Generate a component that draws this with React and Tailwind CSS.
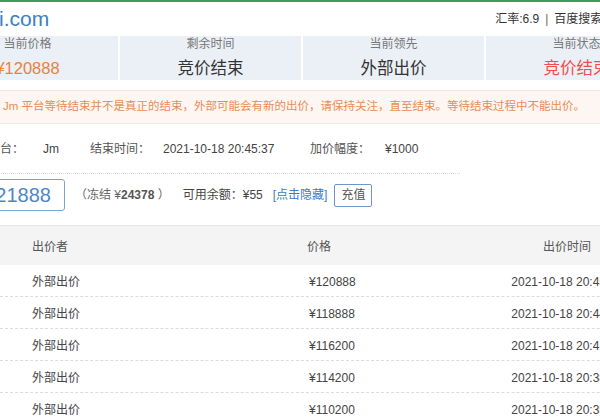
const stats = [
  { label: '当前价格', value: '¥120888', tone: 'text-[#e8813f]' },
  { label: '剩余时间', value: '竞价结束', tone: 'text-[#333]' },
  { label: '当前领先', value: '外部出价', tone: 'text-[#333]' },
  { label: '当前状态', value: '竞价结束', tone: 'text-[#f24b4b]' },
]

const bids = [
  { who: '外部出价', price: '¥120888', time: '2021-10-18 20:45:37' },
  { who: '外部出价', price: '¥118888', time: '2021-10-18 20:44:12' },
  { who: '外部出价', price: '¥116200', time: '2021-10-18 20:41:05' },
  { who: '外部出价', price: '¥114200', time: '2021-10-18 20:38:51' },
  { who: '外部出价', price: '¥110200', time: '2021-10-18 20:35:20' },
]

export default function App() {
  return (
    <div className="w-[600px] h-[420px] overflow-hidden bg-white border-t-2 border-[#3a9d5d] font-['Liberation_Sans','Noto_Sans_CJK_SC',sans-serif] text-[12px] text-[#555]">
      {/* header */}
      <div className="h-[34px] flex items-center whitespace-nowrap">
        <span className="-ml-[1px] text-[21px] text-[#3b80c4]">i.com</span>
        <div className="ml-[446px] flex items-center gap-[6px] text-[12px] text-[#333]">
          <span>汇率:6.9</span>
          <span className="text-[#666]">|</span>
          <span>百度搜索</span>
        </div>
      </div>

      {/* stats */}
      <div className="-ml-[63px] w-[730px] flex gap-[2px]">
        {stats.map((s) => (
          <div key={s.label} className="w-[181px] h-[44px] bg-[#ebf0f6] flex flex-col items-center shrink-0">
            <span className="mt-[1px] text-[12px] text-[#777] leading-[14px]">{s.label}</span>
            <span className={'mt-[7px] text-[16.5px] leading-[20px] whitespace-nowrap ' + s.tone}>{s.value}</span>
          </div>
        ))}
      </div>

      {/* notice */}
      <div className="mt-[10px] -ml-[12px] w-[640px] h-[34px] flex items-center pl-[14px] bg-[#fdf6f3] border border-[#f9e6dc] text-[11.5px] text-[#e98d55] whitespace-nowrap">
        Jm 平台等待结束并不是真正的结束，外部可能会有新的出价，请保持关注，直至结束。等待结束过程中不能出价。
      </div>

      {/* info row */}
      <div className="-ml-[20px] w-[480px] h-[50px] flex items-center border-b border-dotted border-[#d8d8d8] whitespace-nowrap text-[#555]">
        <span className="ml-[8px] w-[55px]">平台：</span>
        <span className="w-[47px] text-[#444]">Jm</span>
        <span className="w-[73px]">结束时间：</span>
        <span className="w-[147px] text-[#444]">2021-10-18 20:45:37</span>
        <span className="w-[75px]">加价幅度：</span>
        <span className="text-[#444]">¥1000</span>
      </div>

      {/* bid row */}
      <div className="mt-[5px] flex items-center whitespace-nowrap">
        <div className="-ml-[40px] w-[105px] h-[32px] shrink-0 border border-[#7fa3d1] rounded-[3px] flex items-center justify-end pr-[13px] text-[20px] text-[#4f86c6]">
          121888
        </div>
        <span className="ml-[10px] text-[#666]">（冻结 ¥<b className="text-[#555]">24378</b> ）</span>
        <span className="ml-[13px] text-[#444]">可用余额：¥55</span>
        <span className="ml-[10px] text-[#3b7cc4]">[点击隐藏]</span>
        <button className="ml-[7px] w-[38px] h-[23px] border border-[#6e96c6] rounded-[2px] text-[#555] text-[12px] flex items-center justify-center">充值</button>
      </div>

      {/* table */}
      <div className="mt-[14px] w-[700px] border-t border-[#e6e6e6]">
        <div className="h-[39px] pt-[3px] bg-[#f4f4f4] flex items-center text-[#555]">
          <span className="w-[307px] shrink-0 pl-[32px]">出价者</span>
          <span className="w-[183px] shrink-0">价格</span>
          <span className="w-[154px] shrink-0 text-center">出价时间</span>
        </div>
        {bids.map((b, i) => (
          <div key={i} className="h-[32px] pt-[2px] flex items-center border-b border-dashed border-[#dcdcdc] whitespace-nowrap text-[#444]">
            <span className="w-[307px] shrink-0 pl-[32px]">{b.who}</span>
            <span className="w-[183px] shrink-0 pl-[2px]">{b.price}</span>
            <span className="w-[154px] shrink-0 text-center">{b.time}</span>
          </div>
        ))}
      </div>
    </div>
  )
}
